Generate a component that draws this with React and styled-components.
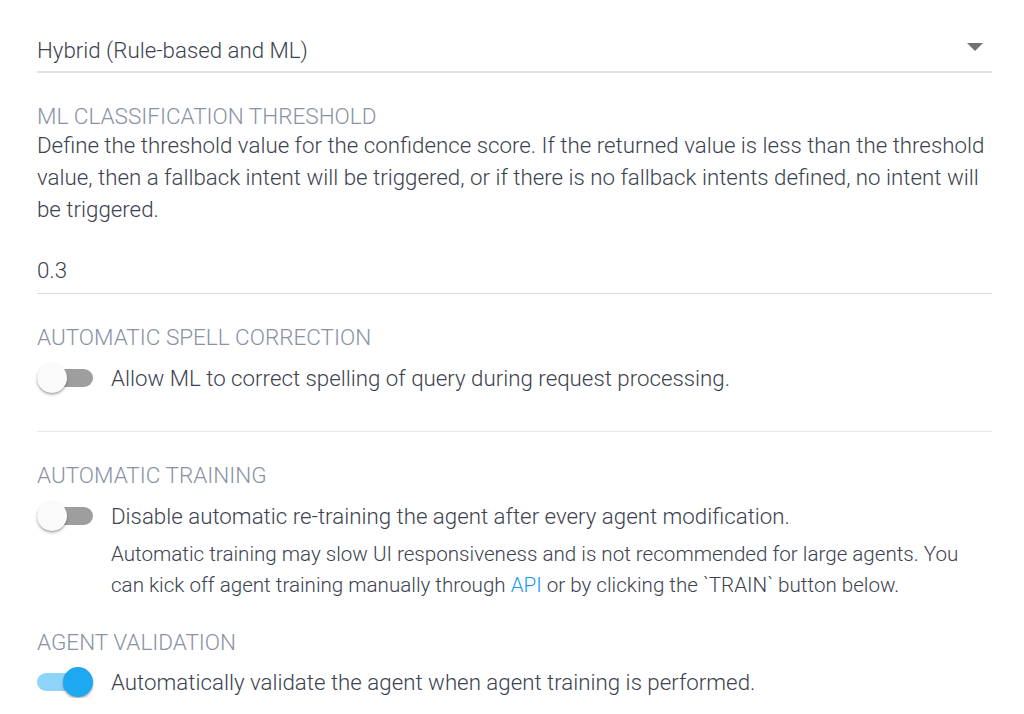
import React from "react";
import styled, { createGlobalStyle } from "styled-components";

const Global = createGlobalStyle`
  html, body { margin: 0; padding: 0; background: #fff; }
  body { font-family: Roboto, "Noto Sans", Arial, sans-serif; -webkit-font-smoothing: antialiased; }
`;

const Page = styled.div`
  width: 955px;
  padding: 34px 0 0 37px;
  display: flex;
  flex-direction: column;
  color: #3c4250;
  font-weight: 300;
`;

const SelectBox = styled.div`
  display: flex;
  align-items: center;
  justify-content: space-between;
  height: 32px;
  padding-bottom: 5px;
  border-bottom: 2px solid #e3e3e3;
  font-size: 22.3px;
`;

const Arrow = styled.span`
  width: 0;
  height: 0;
  margin-right: 9px;
  margin-top: -6px;
  border-left: 8px solid transparent;
  border-right: 8px solid transparent;
  border-top: 8px solid #727272;
`;

const Heading = styled.div`
  font-size: 22.5px;
  line-height: 26px;
  color: #8a92a4;
  text-transform: uppercase;
  margin-top: ${p => p.$top}px;
`;

const Desc = styled.p`
  margin: 0;
  font-size: 22.3px;
  line-height: 32px;
`;

const InputBox = styled.div`
  margin-top: 29px;
  font-size: 22.3px;
  line-height: 32px;
  padding-bottom: 7px;
  border-bottom: 1px solid #dcdcdc;
`;

const Row = styled.div`
  display: flex;
  align-items: center;
  gap: 18px;
  height: 32px;
  margin-top: ${p => p.$top ?? 12}px;
  font-size: 22.3px;
`;

const Track = styled.span`
  position: relative;
  flex: none;
  width: 56px;
  height: 18px;
  border-radius: 9px;
  background: ${p => (p.$on ? "#8ed4f8" : "#9e9e9e")};
`;

const Knob = styled.span`
  position: absolute;
  top: -6px;
  left: ${p => (p.$on ? "26px" : "0")};
  width: 30px;
  height: 30px;
  border-radius: 50%;
  background: ${p => (p.$on ? "#1ea8f2" : "#fafafa")};
  box-shadow: 0 2px 3px rgba(0,0,0,0.25), 0 1px 1px rgba(0,0,0,0.14);
`;

const Divider = styled.div`
  margin-top: 37px;
  height: 1px;
  background: #e8e8e8;
`;

const Sub = styled.p`
  margin: 7px 0 0 74px;
  font-size: 20.6px;
  line-height: 31px;
`;

const Link = styled.a`
  color: #2196f3;
  text-decoration: none;
`;

function Toggle({ on }) {
  return (
    <Track $on={on}>
      <Knob $on={on} />
    </Track>
  );
}

export default function App() {
  return (
    <>
      <Global />
      <Page>
        <SelectBox>
          <span>Hybrid (Rule-based and ML)</span>
          <Arrow />
        </SelectBox>

        <Heading $top={30}>ML Classification Threshold</Heading>
        <Desc>
          Define the threshold value for the confidence score. If the returned value is less than the threshold
          value, then a fallback intent will be triggered, or if there is no fallback intents defined, no intent will
          be triggered.
        </Desc>
        <InputBox>0.3</InputBox>

        <Heading $top={30}>Automatic Spell Correction</Heading>
        <Row>
          <Toggle on={false} />
          <span>Allow ML to correct spelling of query during request processing.</span>
        </Row>

        <Divider />

        <Heading $top={30}>Automatic Training</Heading>
        <Row>
          <Toggle on={false} />
          <span>Disable automatic re-training the agent after every agent modification.</span>
        </Row>
        <Sub>
          Automatic training may slow UI responsiveness and is not recommended for large agents. You
          <br />
          can kick off agent training manually through <Link href="#">API</Link> or by clicking the `TRAIN` button below.
        </Sub>

        <Heading $top={28}>Agent Validation</Heading>
        <Row $top={11}>
          <Toggle on={true} />
          <span>Automatically validate the agent when agent training is performed.</span>
        </Row>
      </Page>
    </>
  );
}
